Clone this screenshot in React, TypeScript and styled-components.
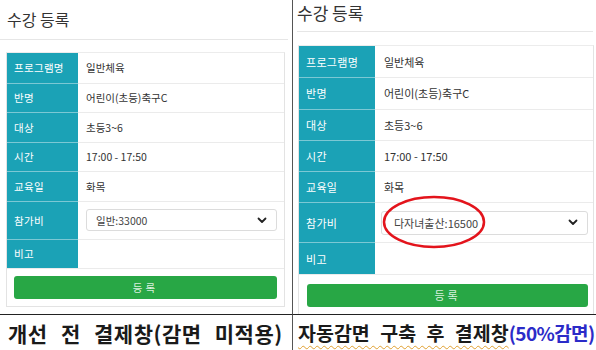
import React from 'react';
import styled, { createGlobalStyle } from 'styled-components';

const Global = createGlobalStyle`
  html, body { margin: 0; padding: 0; background: #fff; }
  body {
    width: 596px; height: 350px; overflow: hidden;
    font-family: "Noto Sans CJK KR", "Noto Sans", sans-serif;
  }
`;

type Cfg = {
  headerH: number; headerML: number; headerMR: number; titlePadL: number; titlePadT: number; titleSize: number;
  cardMT: number; cardML: number; cardW: number; labelW: number; rowH: number; feeRowH: number;
  font: number; valuePad: number; selPadL: number; selPadR: number; selH: number; selTextPad: number;
  btnPadT: number; btnPadL: number; btnPadR: number; btnH: number;
};

const LEFT: Cfg = {
  headerH: 39, headerML: 0, headerMR: 4, titlePadL: 7, titlePadT: 7, titleSize: 16,
  cardMT: 12, cardML: 6, cardW: 279, labelW: 71, rowH: 29.5, feeRowH: 38,
  font: 10.5, valuePad: 8, selPadL: 8, selPadR: 7, selH: 22, selTextPad: 9,
  btnPadT: 7, btnPadL: 7, btnPadR: 7, btnH: 23,
};

const RIGHT: Cfg = {
  headerH: 31, headerML: 4, headerMR: 3, titlePadL: 0, titlePadT: 0, titleSize: 17,
  cardMT: 13, cardML: 5, cardW: 296, labelW: 76, rowH: 31.3, feeRowH: 40,
  font: 11, valuePad: 9, selPadL: 6, selPadR: 5, selH: 24, selTextPad: 12,
  btnPadT: 9, btnPadL: 8, btnPadR: 5, btnH: 23,
};

const Frame = styled.div`
  display: grid;
  grid-template-columns: 293px 303px;
  grid-template-rows: 314px 36px;
  width: 596px;
  height: 350px;
  background: #fff;
`;

const Shot = styled.div<{ $divider?: boolean }>`
  position: relative;
  overflow: hidden;
  box-sizing: border-box;
  border-right: ${p => (p.$divider ? '1px solid #555' : 'none')};
  background: #fff;
`;

const Header = styled.div<{ $c: Cfg }>`
  box-sizing: border-box;
  height: ${p => p.$c.headerH + 1}px;
  margin: 0 ${p => p.$c.headerMR}px 0 ${p => p.$c.headerML}px;
  padding: ${p => p.$c.titlePadT}px 0 0 ${p => p.$c.titlePadL}px;
  border-bottom: 1px solid #e6e6e6;
`;

const Title = styled.h1<{ $size: number }>`
  margin: 0;
  font-size: ${p => p.$size}px;
  line-height: normal;
  font-weight: 400;
  color: #333;
`;

const Card = styled.div<{ $c: Cfg }>`
  box-sizing: border-box;
  margin: ${p => p.$c.cardMT}px 0 0 ${p => p.$c.cardML}px;
  width: ${p => p.$c.cardW}px;
  border: 1px solid #e3e3e3;
  border-top-color: #ececec;
`;

const Row = styled.div<{ $c: Cfg; $h: number }>`
  display: grid;
  grid-template-columns: ${p => p.$c.labelW}px 1fr;
  height: ${p => p.$h}px;
  font-size: ${p => p.$c.font}px;
`;

const Label = styled.div<{ $first?: boolean }>`
  display: flex;
  align-items: center;
  padding-left: 7px;
  background: #1ba2b6;
  color: #fff;
  border-top: ${p => (p.$first ? 'none' : '1px solid #7cc8d4')};
  letter-spacing: 0.3px;
`;

const Value = styled.div<{ $c: Cfg; $first?: boolean; $select?: boolean }>`
  display: flex;
  align-items: center;
  padding-left: ${p => (p.$select ? p.$c.selPadL : p.$c.valuePad)}px;
  padding-right: ${p => (p.$select ? p.$c.selPadR : 0)}px;
  color: #333;
  border-top: ${p => (p.$first ? 'none' : '1px solid #ebebeb')};
`;

const Select = styled.div<{ $c: Cfg }>`
  box-sizing: border-box;
  flex: 1;
  height: ${p => p.$c.selH}px;
  display: flex;
  align-items: center;
  justify-content: space-between;
  padding: 0 9px 0 ${p => p.$c.selTextPad}px;
  border: 1px solid #dcdcdc;
  border-radius: 3px;
  background: #fff;
  color: #444;
`;

const ButtonBar = styled.div<{ $c: Cfg }>`
  padding: ${p => p.$c.btnPadT}px ${p => p.$c.btnPadR}px 7px ${p => p.$c.btnPadL}px;
  border-top: 1px solid #ebebeb;
`;

const Submit = styled.div<{ $c: Cfg }>`
  height: ${p => p.$c.btnH}px;
  display: flex;
  align-items: center;
  justify-content: center;
  background: #28a745;
  border-radius: 3px;
  color: rgba(255, 255, 255, 0.85);
  font-size: ${p => p.$c.font}px;
  letter-spacing: 3px;
`;

const Circle = styled.svg`
  position: absolute;
  left: 89px;
  top: 195px;
`;

const Caption = styled.div<{ $divider?: boolean; $pad: number; $size: number; $word: number; $letter: number }>`
  box-sizing: border-box;
  display: flex;
  align-items: center;
  padding-left: ${p => p.$pad}px;
  border-top: 1px solid #222;
  border-right: ${p => (p.$divider ? '1px solid #555' : 'none')};
  font-family: "Noto Sans CJK KR", sans-serif;
  font-weight: 700;
  font-size: ${p => p.$size}px;
  color: #1a1a1a;
  white-space: nowrap;
  word-spacing: ${p => p.$word}px;
  letter-spacing: ${p => p.$letter}px;
  overflow: hidden;
`;

const Squiggle = styled.span`
  text-decoration: underline wavy #e0a030;
  text-decoration-thickness: 1px;
  text-underline-offset: 4px;
`;

const Blue = styled.span`
  color: #2b2bc8;
  font-size: 19px;
  letter-spacing: -0.6px;
  word-spacing: 0;
`;

const Chevron = () => (
  <svg width="10" height="7" viewBox="0 0 10 7">
    <polyline points="1.5,1.5 5,5 8.5,1.5" fill="none" stroke="#222" strokeWidth="1.8" strokeLinecap="round" strokeLinejoin="round" />
  </svg>
);

const rows: [string, string][] = [
  ['프로그램명', '일반체육'],
  ['반명', '어린이(초등)축구C'],
  ['대상', '초등3~6'],
  ['시간', '17:00 - 17:50'],
  ['교육일', '화목'],
];

function Registration({ c, fee }: { c: Cfg; fee: string }) {
  return (
    <>
      <Header $c={c}>
        <Title $size={c.titleSize}>수강 등록</Title>
      </Header>
      <Card $c={c}>
        {rows.map(([k, v], i) => (
          <Row key={k} $c={c} $h={c.rowH}>
            <Label $first={i === 0}>{k}</Label>
            <Value $c={c} $first={i === 0}>{v}</Value>
          </Row>
        ))}
        <Row $c={c} $h={c.feeRowH}>
          <Label>참가비</Label>
          <Value $c={c} $select>
            <Select $c={c}>
              <span>{fee}</span>
              <Chevron />
            </Select>
          </Value>
        </Row>
        <Row $c={c} $h={c.rowH}>
          <Label>비고</Label>
          <Value $c={c} />
        </Row>
        <ButtonBar $c={c}>
          <Submit $c={c}>등록</Submit>
        </ButtonBar>
      </Card>
    </>
  );
}

export default function App() {
  return (
    <>
      <Global />
      <Frame>
        <Shot $divider>
          <Registration c={LEFT} fee="일반:33000" />
        </Shot>
        <Shot>
          <Registration c={RIGHT} fee="다자녀출산:16500" />
          <Circle width="104" height="54" viewBox="0 0 104 54">
            <ellipse cx="52" cy="27" rx="50" ry="25" fill="none" stroke="#e3141c" strokeWidth="2.5" />
          </Circle>
        </Shot>
        <Caption $divider $pad={8} $size={21} $word={8} $letter={0.5}>개선 전 결제창(감면 미적용)</Caption>
        <Caption $pad={5} $size={19.5} $word={6} $letter={0}>
          <Squiggle>자동감면 구축 후 결제창</Squiggle>
          <Blue>(50%감면)</Blue>
        </Caption>
      </Frame>
    </>
  );
}
